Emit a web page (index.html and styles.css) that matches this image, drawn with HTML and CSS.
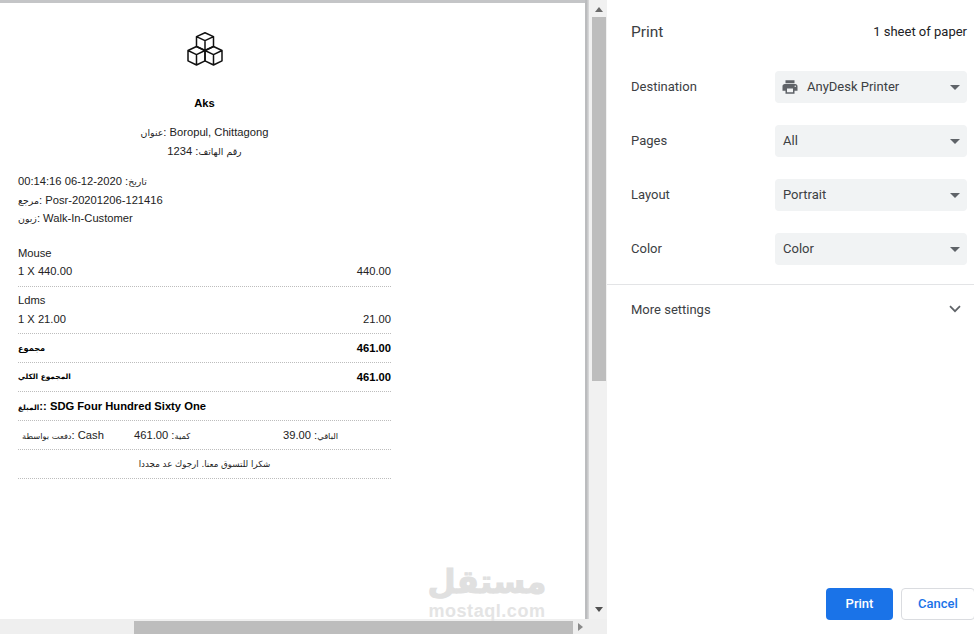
FILE: index.html
```html
<!DOCTYPE html>
<html lang="en">
<head>
<meta charset="utf-8">
<title>Print</title>
<link rel="stylesheet" href="styles.css">
</head>
<body>
<div class="app">
  <main class="preview">
    <div class="viewport">
      <div class="paper">
        <div class="receipt">
          <div class="logo">
            <svg width="36" height="34" viewBox="0 0 36 34" fill="none" stroke="#111" stroke-width="1.5" stroke-linejoin="round">
              <path d="M18 .8 L26.5 4.6 L26.5 14.5 L18 18.5 L9.5 14.5 L9.5 4.6 Z M9.5 4.6 L18 8.6 L26.5 4.6 M18 8.6 L18 18.5"/>
              <path d="M9.5 14.5 L18 18.5 L18 28.8 L9.5 33 L1 28.8 L1 18.5 Z M1 18.5 L9.5 22.6 L18 18.5 M9.5 22.6 L9.5 33"/>
              <path d="M26.5 14.5 L35 18.5 L35 28.8 L26.5 33 L18 28.8 L18 18.5 Z M18 18.5 L26.5 22.6 L35 18.5 M26.5 22.6 L26.5 33"/>
            </svg>
          </div>
          <div class="shop-name">Aks</div>
          <div class="shop-line first"><span class="ar">عنوان</span>: Boropul, Chittagong</div>
          <div class="shop-line"><span class="ar">رقم الهاتف</span>: 1234</div>
          <div class="meta first"><span class="ar">تاريخ</span>: 2020-12-06 00:14:16</div>
          <div class="meta"><span class="ar">مرجع</span>: Posr-20201206-121416</div>
          <div class="meta"><span class="ar">زبون</span>: Walk-In-Customer</div>
          <div class="item">
            <div class="item-name">Mouse</div>
            <div class="row"><span>1 X 440.00</span><span>440.00</span></div>
          </div>
          <div class="item second">
            <div class="item-name">Ldms</div>
            <div class="row"><span>1 X 21.00</span><span>21.00</span></div>
          </div>
          <div class="total"><span class="ar-b">مجموع</span><span>461.00</span></div>
          <div class="total"><span class="ar-b narrow">المجموع الكلي</span><span>461.00</span></div>
          <div class="total"><span><span class="ar-b narrow">المبلغ</span>:: SDG Four Hundred Sixty One</span></div>
          <div class="pay">
            <span class="pay-a"><span class="ar">دفعت بواسطة</span>: Cash</span>
            <span class="pay-b"><span class="ar">كمية</span>: 461.00</span>
            <span class="pay-c"><span class="ar">الباقي</span>: 39.00</span>
          </div>
          <div class="thanks">شكرا للتسوق معنا. ارجوك عد مجددا</div>
        </div>
      </div>
    </div>
    <div class="vbar">
      <div class="arrow-up"></div>
      <div class="vthumb"></div>
      <div class="arrow-down"></div>
    </div>
    <div class="hbar">
      <div class="htrack"><div class="hthumb"></div></div>
      <div class="arrow-right"></div>
    </div>
    <div class="watermark">
      <div class="wm-ar">مستقل</div>
      <div class="wm-en">mostaql.com</div>
    </div>
  </main>
  <aside class="sidebar">
    <header class="head"><h1>Print</h1><span class="sheets">1 sheet of paper</span></header>
    <div class="settings">
      <div class="setting">
        <label>Destination</label>
        <div class="select">
          <svg class="printer" width="18" height="18" viewBox="0 0 24 24" fill="#5f6368"><path d="M19 8H5c-1.66 0-3 1.34-3 3v6h4v4h12v-4h4v-6c0-1.66-1.34-3-3-3zm-3 11H8v-5h8v5zm3-7c-.55 0-1-.45-1-1s.45-1 1-1 1 .45 1 1-.45 1-1 1zm-1-9H6v4h12V3z"/></svg>
          <span>AnyDesk Printer</span><i class="caret"></i>
        </div>
      </div>
      <div class="setting"><label>Pages</label><div class="select"><span>All</span><i class="caret"></i></div></div>
      <div class="setting"><label>Layout</label><div class="select"><span>Portrait</span><i class="caret"></i></div></div>
      <div class="setting"><label>Color</label><div class="select"><span>Color</span><i class="caret"></i></div></div>
    </div>
    <div class="more">
      <span>More settings</span>
      <svg width="12" height="8" viewBox="0 0 12 8" fill="none" stroke="#5f6368" stroke-width="1.7"><path d="M1 1.2 L6 6.2 L11 1.2"/></svg>
    </div>
    <footer class="actions">
      <button class="btn primary">Print</button>
      <button class="btn ghost">Cancel</button>
    </footer>
  </aside>
</div>
</body>
</html>
```
FILE: styles.css
```css
* { box-sizing: border-box; }
html, body { margin: 0; height: 100%; overflow: hidden; background: #fff; }
.app { display: flex; width: 974px; height: 634px; }

.preview {
  position: relative;
  width: 607px;
  height: 634px;
  flex: none;
  display: grid;
  grid-template-columns: 589px 18px;
  grid-template-rows: 619px 15px;
  background: #e8e8e8;
  border-right: 1px solid #e2e3e5;
}
.viewport {
  overflow: hidden;
  background: linear-gradient(to right, #c4c5c7 585px, #b4b5b7 586px, #dcdcdd 589px);
  padding: 3px 4px 0 0;
}
.paper {
  width: 585px;
  height: 620px;
  background: #fff;
}
.receipt {
  width: 373px;
  margin-left: 18px;
  padding-top: 29px;
  font-family: "Liberation Sans", Arial, sans-serif;
  font-size: 11.2px;
  color: #222;
}
.ar { font-family: "DejaVu Sans", "Noto Sans", sans-serif; font-size: 9.4px; line-height: 0; font-weight: 400; }
.ar-b { font-family: "DejaVu Sans", "Noto Sans", sans-serif; font-size: 8.2px; line-height: 0; font-weight: 700; }
.ar-b.narrow { font-size: 7.4px; }
.logo { display: flex; justify-content: center; height: 35px; }
.shop-name { margin-top: 29px; text-align: center; font-weight: 700; color: #000; line-height: 14px; }
.shop-line { text-align: center; line-height: 19px; }
.shop-line.first { margin-top: 13px; }
.meta { line-height: 18.5px; }
.meta.first { margin-top: 11px; }
.item { margin-top: 17px; padding-bottom: 6px; border-bottom: 1px dotted #bdbdbd; }
.item.second { margin-top: 0; padding-top: 5px; padding-bottom: 5px; }
.item-name { line-height: 16px; }
.row { display: flex; justify-content: space-between; line-height: 18px; margin-top: 1px; }
.second .row { margin-top: 2px; }
.total {
  display: flex;
  justify-content: space-between;
  height: 29px;
  align-items: center;
  font-weight: 700;
  color: #000;
  border-bottom: 1px dotted #bdbdbd;
}
.pay { height: 29px; display: flex; align-items: center; border-bottom: 1px dotted #bdbdbd; }
.pay .ar { font-size: 8.3px; }
.pay-a { width: 116px; padding-left: 4px; flex: none; }
.pay-b { width: 149px; flex: none; }
.thanks {
  height: 29px;
  display: flex;
  align-items: center;
  justify-content: center;
  font-family: "DejaVu Sans", "Noto Sans", sans-serif;
  font-size: 8.7px;
  border-bottom: 1px dotted #bdbdbd;
}

.watermark {
  position: absolute;
  left: 426px;
  top: 564px;
  width: 122px;
  text-align: center;
  color: #e0e0e0;
  font-weight: 700;
}
.wm-ar { font-family: "DejaVu Sans", sans-serif; font-size: 32.5px; line-height: 36px; -webkit-text-stroke: 1px #e0e0e0; }
.wm-en { font-family: "Liberation Sans", sans-serif; font-size: 18px; line-height: 18px; margin-top: 2px; letter-spacing: .55px; color: #e4e4e4; }

.vbar { background: #f1f1f1; display: flex; flex-direction: column; align-items: center; padding-left: 1px; }
.vthumb { width: 14px; height: 364px; background: #bdbdbd; margin-top: 5px; }
.arrow-up, .arrow-down { width: 0; height: 0; border-left: 4px solid transparent; border-right: 4px solid transparent; }
.arrow-up { border-bottom: 5px solid #6b6b6b; margin-top: 7px; }
.arrow-down { border-top: 5px solid #505050; margin-top: auto; margin-bottom: 7px; }
.hbar { grid-column: 1 / 3; display: flex; align-items: center; background: #efefef; }
.htrack { width: 574px; height: 15px; padding-top: 2px; }
.hthumb { width: 439px; height: 13px; margin-left: 134px; background: #bdbdbd; }
.arrow-right { width: 0; height: 0; border-top: 4px solid transparent; border-bottom: 4px solid transparent; border-left: 5px solid #8a8a8a; margin-left: 4px; }

.sidebar {
  flex: 1;
  min-width: 0;
  display: flex;
  flex-direction: column;
  font-family: Roboto, sans-serif;
  font-size: 13px;
  color: #3c4043;
  background: #fff;
}
.head { display: flex; justify-content: space-between; align-items: center; height: 63px; padding: 0 7px 0 24px; }
h1 { margin: 0; font-size: 15.5px; font-weight: 400; }
.sheets { color: #202124; font-size: 13px; }
.settings { display: flex; flex-direction: column; gap: 22px; padding: 8px 7px 0 24px; }
.setting { display: flex; align-items: center; justify-content: space-between; height: 32px; }
.setting label { padding-bottom: 2px; }
.select {
  width: 192px;
  height: 32px;
  background: #f1f3f4;
  border-radius: 4px;
  display: flex;
  align-items: center;
  padding: 0 8px 2px 8px;
  position: relative;
}
.printer { margin-right: 8px; margin-left: -2px; margin-top: 2px; }
.caret { position: absolute; right: 7px; top: 14px; width: 0; height: 0; border-left: 5px solid transparent; border-right: 5px solid transparent; border-top: 5px solid #5f6368; }
.more {
  display: flex;
  align-items: center;
  justify-content: space-between;
  margin-top: 19px;
  height: 51px;
  padding: 0 13px 2px 24px;
  border-top: 1px solid #e3e4e6;
}
.actions { margin-top: auto; display: flex; gap: 8px; padding: 0 0 14px 219px; overflow: hidden; }
.btn { height: 32px; border-radius: 4px; font-family: Roboto, sans-serif; font-size: 13px; font-weight: 500; padding: 0 0 2px; flex: none; }
.primary { width: 67px; background: #1a73e8; color: #fff; border: 0; }
.ghost { width: 74px; background: #fff; color: #1a73e8; border: 1px solid #dadce0; }
```
